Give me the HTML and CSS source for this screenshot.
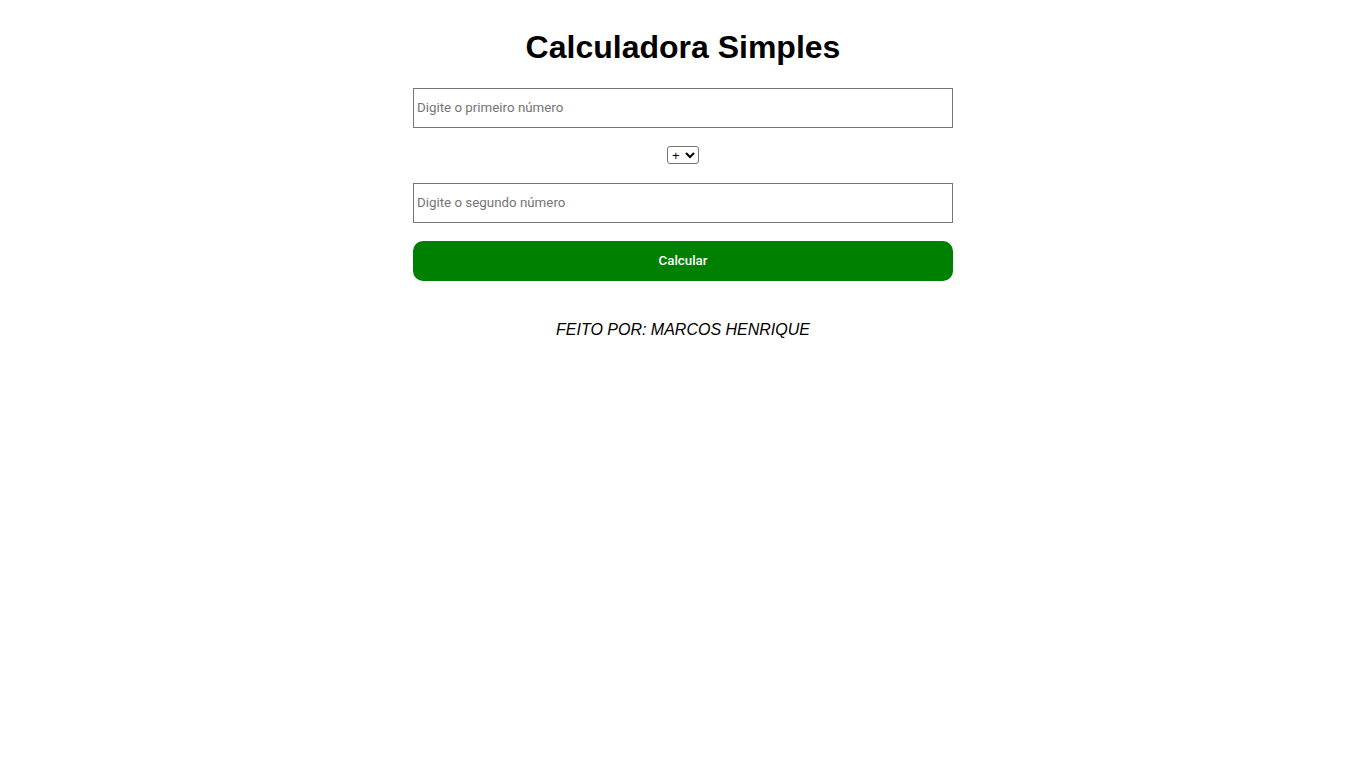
FILE: index.html
```html
<!DOCTYPE html>
<html lang="pt-BR">
<head>
<meta charset="UTF-8">
<title>Calculadora Simples</title>
<link rel="stylesheet" href="styles.css">
</head>
<body>
<main class="calc">
  <h1 class="title">Calculadora Simples</h1>
  <input class="field" type="number" placeholder="Digite o primeiro número">
  <select class="op">
    <option>+</option>
    <option>-</option>
    <option>*</option>
    <option>/</option>
  </select>
  <input class="field" type="number" placeholder="Digite o segundo número">
  <button class="btn" type="button">Calcular</button>
  <p class="result"></p>
  <footer class="credit">FEITO POR: MARCOS HENRIQUE</footer>
</main>
</body>
</html>
```
FILE: styles.css
```css
html, body {
  margin: 0;
  background: #fff;
  font-family: "Liberation Sans", Arial, sans-serif;
  color: #000;
}
.calc {
  width: 540px;
  margin: 0 auto;
  padding-top: 29px;
  display: flex;
  flex-direction: column;
  align-items: center;
}
.title {
  margin: 0 0 22px;
  font-size: 32px;
  line-height: 37px;
  font-weight: bold;
}
.field {
  box-sizing: border-box;
  width: 100%;
  height: 40px;
  padding: 0 3px 2px;
  border: 1px solid #767676;
  border-radius: 0;
  font-family: Roboto, "Liberation Sans", Arial, sans-serif;
  font-size: 13.33px;
  margin: 0;
}
.field::placeholder { color: #757575; }
.op {
  margin: 18px 0 19px;
  height: 18px;
  width: 32px;
  font-family: "Liberation Sans", Arial, sans-serif;
  font-size: 13px;
  border: 1px solid #767676;
  border-radius: 3px;
  padding: 0;
  background: #fff;
}
.btn {
  margin-top: 18px;
  width: 100%;
  height: 40px;
  border: none;
  border-radius: 10px;
  background: #008000;
  color: #fff;
  font-family: Roboto, "Liberation Sans", Arial, sans-serif;
  font-size: 13.33px;
  font-weight: 500;
  padding: 0 0 1px;
  cursor: pointer;
}
.result {
  margin: 0;
  height: 40px;
}
.credit {
  font-style: italic;
  font-size: 16px;
  line-height: 18px;
}
```
